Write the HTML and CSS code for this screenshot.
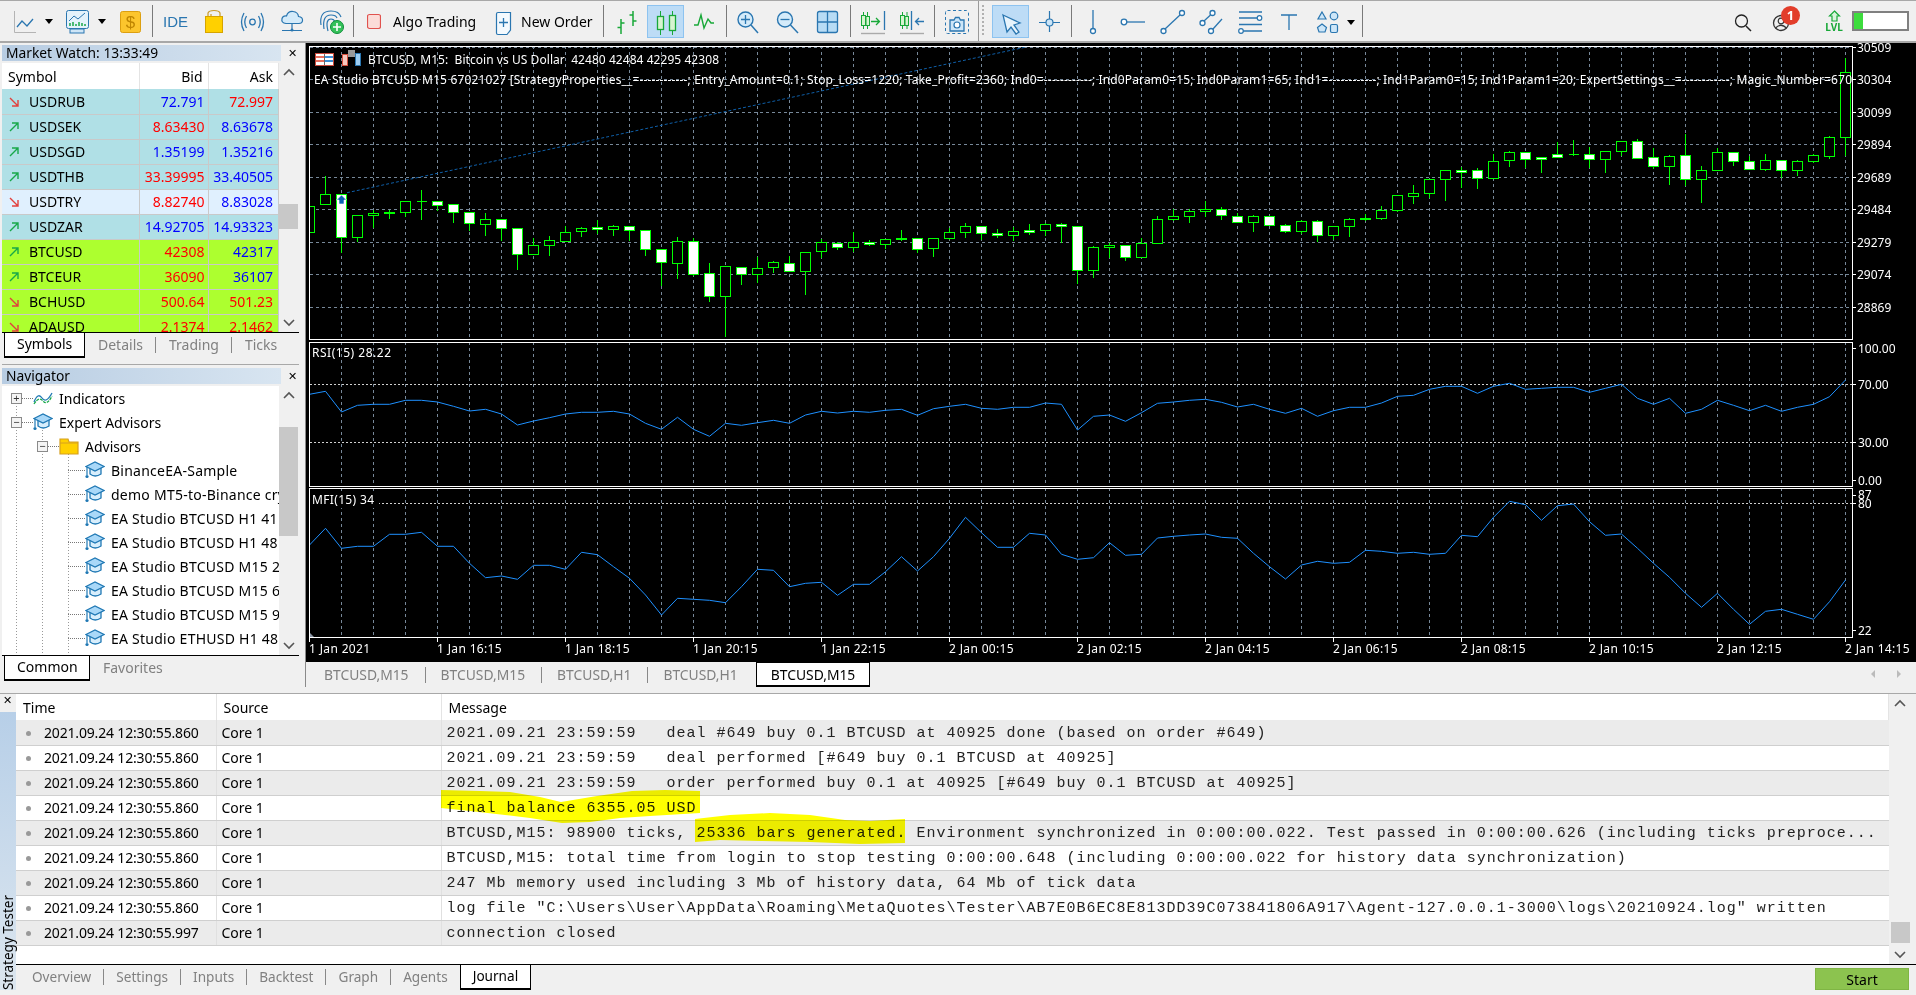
FILE: index.html
```html
<!DOCTYPE html>
<html lang="en">
<head>
    <meta charset="UTF-8">
    <title>MetaTrader 5</title>
    <link rel="stylesheet" href="styles.css">
</head>
<body>

<svg class="defs" width="0" height="0">
    <symbol id="ar-up" viewBox="0 0 10 10"><path d="M1 9 L9 1 M3 1 H9 V7" fill="none" stroke="#18a84a" stroke-width="1.4"/></symbol>
    <symbol id="ar-dn" viewBox="0 0 10 10"><path d="M1 1 L9 9 M3 9 H9 V3" fill="none" stroke="#e2403c" stroke-width="1.4"/></symbol>
    <symbol id="cap" viewBox="0 0 20 20">
        <path d="M5 8 V14 Q10 18 16 14 V8" fill="#d8eefc" stroke="#1f78b4" stroke-width="1.3"/>
        <path d="M1 6.5 L10 2 L19 6.5 L10 11 Z" fill="#a9d8f8" stroke="#1f78b4" stroke-width="1.3"/>
        <path d="M2 7 V15" stroke="#1f78b4" stroke-width="1.2"/>
        <circle cx="2" cy="16.5" r="1.6" fill="#1f78b4"/>
    </symbol>
    <symbol id="chev-up" viewBox="0 0 14 20"><path d="M2 12 L7 7 L12 12" fill="none" stroke="#555" stroke-width="1.6"/></symbol>
    <symbol id="chev-dn" viewBox="0 0 14 20"><path d="M2 8 L7 13 L12 8" fill="none" stroke="#555" stroke-width="1.6"/></symbol>
</svg>

<header class="toolbar">
    <svg width="36" height="40"><path d="M6.500 10 V31.500 H28" fill="none" stroke="#b4b4b4"/><path d="M9 26 L14 20 L19 25 L25 18" fill="none" stroke="#2a76b0" stroke-width="1.3"/></svg>
    <svg width="14" height="40"><path d="M1 18 h8 l-4 5z"/></svg>
    <svg width="36" height="40"><rect x="8.500" y="9.500" width="22" height="18" rx="2" fill="#e4f2fb" stroke="#2a76b0"/><path d="M11 20 L16 15 L20 18 L27 12" fill="none" stroke="#2a76b0"/><path d="M12 25 v-3 M15 25 v-4 M18 25 v-2 M21 25 v-4 M24 25 v-3 M27 25 v-2" stroke="#18a84a" stroke-width="1.5"/><rect x="12" y="28" width="14" height="4" fill="#cfe6f7" stroke="#2a76b0"/></svg>
    <svg width="14" height="40"><path d="M4 18 h8 l-4 5z"/></svg>
    <svg width="38" height="40"><rect x="12.500" y="10.500" width="20" height="21" rx="2" fill="#fcc52d" stroke="#dc9f10"/><text x="22.500" y="27" class="dollar">$</text></svg>
    <i class="sep sep-a"></i>
    <span class="ide">IDE</span>
    <svg width="44" height="40"><rect x="19.500" y="15.500" width="17" height="16" fill="#ffd000" stroke="#d6a400"/><path d="M22 15 V12 Q23 9.500 28 9.500 Q33 9.500 34 12 V15 M25 15 V13" fill="none" stroke="#c89a2a" stroke-width="1.2"/></svg>
    <svg width="42" height="40"><circle cx="22.500" cy="21" r="2.800" fill="none" stroke="#2a76b0" stroke-width="1.3"/><path d="M16.500 15 Q13 21 16.500 27 M28.500 15 Q32 21 28.500 27 M14 12 Q9 21 14 30 M31 12 Q36 21 31 30" fill="none" stroke="#2a76b0" stroke-width="1.3"/></svg>
    <svg width="40" height="40"><path d="M14 22.500 Q9 22 10 17.500 Q11 14.500 14.500 15 Q16 10 21 10.500 Q26 11 26.500 15.500 Q31 16 30.500 20 Q30 22.500 27 22.500 Z" fill="#d4ebfa" stroke="#2a76b0" stroke-width="1.2"/><path d="M20 23 V28 M10 29.500 H30" stroke="#2a76b0" stroke-width="1.2"/><circle cx="20" cy="29" r="1.500" fill="#2a76b0"/></svg>
    <svg width="36" height="40"><path d="M9 24 Q7 10 19 10 Q27 10 29 16 M12 28 Q10 14 19 14 Q24 14 25 17 M16 30 Q13 18 19 18 Q22 18 23 21" fill="none" stroke="#2a76b0" stroke-width="1.2"/><circle cx="25" cy="26" r="6.500" fill="#35c15a" stroke="#0d8f38"/><path d="M25 22 V30 M21 26 H29" stroke="#fff" stroke-width="1.6"/></svg>
    <i class="sep sep-b"></i>
    <svg class="ico-algo" width="14" height="40"><rect x="0.500" y="13.500" width="13" height="14" rx="2" fill="#fbdcd8" stroke="#e0524e" stroke-width="1.200"/></svg>
    <span class="tool-label label-algo">Algo Trading</span>
    <svg class="ico-order" width="17" height="40"><path d="M1.500 13 Q1.500 11.500 3 11.500 H15.500 V29 L12 33.500 H3 Q1.500 33.500 1.500 32 Z" fill="#f4fafe" stroke="#2a76b0" stroke-width="1.2"/><path d="M8.500 17 V26 M4 21.500 H13" stroke="#2a76b0" stroke-width="1.3"/></svg>
    <span class="tool-label label-order">New Order</span>
    <i class="sep sep-c"></i>
    <svg width="43" height="40"><path d="M17 33 V18 M13.500 26.500 H17 M17 22 H20.500 M29 25 V10 M25.500 14 H29 M29 20 H32.500" fill="none" stroke="#18a838" stroke-width="1.5"/></svg>
    <svg class="on" width="37" height="33"><path d="M12.500 5 V29 M24.500 5 V29" stroke="#18a838"/><rect x="9.500" y="10.500" width="6" height="13" fill="#d7f4d0" stroke="#18a838" stroke-width="1.300"/><rect x="21.500" y="9.500" width="6" height="15" fill="#d7f4d0" stroke="#18a838" stroke-width="1.300"/></svg>
    <svg width="38" height="40"><path d="M10 24 L14 24 L17 14 L20 27 L24 18 L27 22 L30 22" fill="none" stroke="#18a838" stroke-width="1.4"/></svg>
    <i class="sep sep-d"></i>
    <svg width="41" height="40"><circle cx="18.500" cy="18.500" r="7.500" fill="#d4ebfa" stroke="#2a76b0" stroke-width="1.400"/><path d="M18.500 14 V23 M14 18.500 H23" stroke="#2a76b0" stroke-width="1.300"/><path d="M24 24 L31 32" stroke="#2a76b0" stroke-width="1.500"/></svg>
    <svg width="40" height="40"><circle cx="17" cy="18.500" r="7.500" fill="#d4ebfa" stroke="#2a76b0" stroke-width="1.400"/><path d="M12.500 18.500 H21.500" stroke="#2a76b0" stroke-width="1.300"/><path d="M22.500 24 L30 32" stroke="#2a76b0" stroke-width="1.500"/></svg>
    <svg width="38" height="40"><rect x="9.500" y="10.500" width="20" height="21" rx="2" fill="#b8dcf5" stroke="#2a76b0" stroke-width="1.300"/><path d="M19.500 11 V31 M10 21 H29" stroke="#2a76b0" stroke-width="1.300"/></svg>
    <i class="sep sep-e"></i>
    <svg width="41" height="40"><path d="M12.500 11 V28 M16.500 11 V28" stroke="#18a838"/><rect x="10.500" y="14.500" width="4" height="10" fill="#d7f4d0" stroke="#18a838"/><rect x="15" y="15.500" width="3.500" height="9" fill="#d7f4d0" stroke="#18a838"/><path d="M20 20.500 H28 M25 17 L28.500 20.500 L25 24" fill="none" stroke="#18a838" stroke-width="1.300"/><path d="M33.500 10 V29" stroke="#2a76b0" stroke-width="1.300"/><path d="M10 32.500 H34" stroke="#aaa" stroke-width="1.400"/></svg>
    <svg width="39" height="40"><path d="M10.500 11 V28 M15 11 V28" stroke="#18a838"/><rect x="8.500" y="14.500" width="4" height="10" fill="#d7f4d0" stroke="#18a838"/><rect x="13" y="15.500" width="3.500" height="9" fill="#d7f4d0" stroke="#18a838"/><path d="M19.500 10 V29" stroke="#2a76b0" stroke-width="1.300"/><path d="M32 20.500 H24 M27 17 L23.500 20.500 L27 24" fill="none" stroke="#2a76b0" stroke-width="1.300"/><path d="M8 32.500 H32" stroke="#aaa" stroke-width="1.400"/></svg>
    <i class="sep sep-f"></i>
    <svg width="40" height="40"><rect x="10.500" y="9.500" width="23" height="23" rx="2" fill="none" stroke="#2a76b0" stroke-dasharray="3 2.500"/><path d="M15 19 H19 L20.500 16.500 H24 L25.500 19 H29 V30 H15 Z" fill="#cde6f8" stroke="#2a76b0" stroke-width="1.300"/><circle cx="22" cy="24" r="3" fill="#fff" stroke="#2a76b0" stroke-width="1.200"/></svg>
    <i class="grip"></i>
    <svg class="on" width="37" height="33"><path d="M10 9 L27 17 L21 19 L26 26 L23 28 L18 21 L14 26 Z" fill="#e8f4fc" stroke="#2a76b0" stroke-width="1.300"/></svg>
    <svg width="38" height="40"><path d="M20.500 10 V31 M10 21.500 H31" stroke="#2a76b0" stroke-width="1.200"/><circle cx="20.500" cy="21.500" r="3.500" fill="#cde6f8" stroke="#2a76b0" stroke-width="1.200"/></svg>
    <i class="sep sep-g"></i>
    <svg width="41" height="40"><path d="M21 9 V27" stroke="#2a76b0" stroke-width="1.300"/><circle cx="21" cy="30" r="2.500" fill="#fff" stroke="#2a76b0" stroke-width="1.300"/></svg>
    <svg width="40" height="40"><circle cx="11" cy="21" r="2.800" fill="#fff" stroke="#2a76b0" stroke-width="1.300"/><path d="M14 21 H32" stroke="#2a76b0" stroke-width="1.300"/></svg>
    <svg width="39" height="40"><circle cx="10.500" cy="30" r="2.500" fill="#fff" stroke="#2a76b0" stroke-width="1.300"/><circle cx="29" cy="12" r="2.500" fill="#fff" stroke="#2a76b0" stroke-width="1.300"/><path d="M12 28 L27 14" stroke="#2a76b0" stroke-width="1.300"/></svg>
    <svg width="39" height="40"><circle cx="10.500" cy="22" r="2.500" fill="#fff" stroke="#2a76b0" stroke-width="1.300"/><circle cx="20.500" cy="12" r="2.500" fill="#fff" stroke="#2a76b0" stroke-width="1.300"/><path d="M12 20 L18.500 14" stroke="#2a76b0" stroke-width="1.300"/><circle cx="19" cy="30" r="2.500" fill="#fff" stroke="#2a76b0" stroke-width="1.300"/><path d="M21 28 L30 18" stroke="#2a76b0" stroke-width="1.300"/></svg>
    <svg width="40" height="40"><path d="M8 11 H31 M8 17 H26 M8 23.500 H31 M12 30 H31" stroke="#2a76b0" stroke-width="1.300"/><circle cx="28.500" cy="17" r="2.300" fill="#fff" stroke="#2a76b0" stroke-width="1.200"/><circle cx="10" cy="30" r="2.300" fill="#fff" stroke="#2a76b0" stroke-width="1.200"/></svg>
    <svg width="36" height="40"><path d="M10 14 H26 M18 14 V29" stroke="#2a76b0" stroke-width="1.300"/></svg>
    <svg width="39" height="40"><path d="M15 11 L19 18 H11 Z" fill="#cde6f8" stroke="#2a76b0" stroke-width="1.200"/><circle cx="27" cy="15" r="3.800" fill="#cde6f8" stroke="#2a76b0" stroke-width="1.200"/><path d="M15 23 L19.500 26.500 L18 31 H12 L10.500 26.500 Z" fill="#cde6f8" stroke="#2a76b0" stroke-width="1.200"/><rect x="23.500" y="23.500" width="7" height="8" rx="1.500" fill="#cde6f8" stroke="#2a76b0" stroke-width="1.200"/></svg>
    <svg width="13" height="40"><path d="M1 19 h8 l-4 5z"/></svg>
    <i class="sep sep-h"></i>

    <div class="tool-right">
        <svg width="18" height="40"><circle cx="7.500" cy="20" r="6" fill="none" stroke="#222" stroke-width="1.300"/><path d="M12 25 L17 30" stroke="#222" stroke-width="1.500"/></svg>
        <div class="user">
            <svg width="18" height="40"><circle cx="9" cy="22" r="7.500" fill="none" stroke="#333" stroke-width="1.300"/><circle cx="9" cy="20" r="2.800" fill="none" stroke="#333" stroke-width="1.200"/><path d="M3.500 27 Q9 21.500 14.500 27" fill="none" stroke="#333" stroke-width="1.200"/></svg>
            <span class="badge">1</span>
        </div>
        <div class="lvl">
            <svg width="15" height="12"><path d="M7.500 1 L12.500 6 H10 V11 H5 V6 H2.500 Z" fill="#d8f5dc" stroke="#18a838" stroke-width="1.200"/></svg>
            <span>LVL</span>
        </div>
        <div class="level-bar"><div class="level-fill"></div></div>
    </div>
</header>

<div class="middle">
    <aside class="side">
        <section class="panel">
            <div class="panel-head">
                <div class="panel-title">Market Watch: 13:33:49</div>
                <span class="panel-close">✕</span>
            </div>
            <div class="panel-body">
                <div class="panel-view">
                    <table class="quotes">
                        <tr class="quotes-head"><th class="c-sym">Symbol</th><th>Bid</th><th>Ask</th></tr>
                        <tr class="teal"><td class="c-sym"><svg class="arr"><use href="#ar-dn"/></svg>USDRUB</td><td class="b">72.791</td><td class="r">72.997</td></tr>
                        <tr class="teal"><td class="c-sym"><svg class="arr"><use href="#ar-up"/></svg>USDSEK</td><td class="r">8.63430</td><td class="b">8.63678</td></tr>
                        <tr class="teal"><td class="c-sym"><svg class="arr"><use href="#ar-up"/></svg>USDSGD</td><td class="b">1.35199</td><td class="b">1.35216</td></tr>
                        <tr class="teal"><td class="c-sym"><svg class="arr"><use href="#ar-up"/></svg>USDTHB</td><td class="r">33.39995</td><td class="b">33.40505</td></tr>
                        <tr class="pale"><td class="c-sym"><svg class="arr"><use href="#ar-dn"/></svg>USDTRY</td><td class="r">8.82740</td><td class="b">8.83028</td></tr>
                        <tr class="teal"><td class="c-sym"><svg class="arr"><use href="#ar-up"/></svg>USDZAR</td><td class="b">14.92705</td><td class="b">14.93323</td></tr>
                        <tr class="lime"><td class="c-sym"><svg class="arr"><use href="#ar-up"/></svg>BTCUSD</td><td class="r">42308</td><td class="b">42317</td></tr>
                        <tr class="lime"><td class="c-sym"><svg class="arr"><use href="#ar-up"/></svg>BTCEUR</td><td class="r">36090</td><td class="b">36107</td></tr>
                        <tr class="lime"><td class="c-sym"><svg class="arr"><use href="#ar-dn"/></svg>BCHUSD</td><td class="r">500.64</td><td class="r">501.23</td></tr>
                        <tr class="lime"><td class="c-sym"><svg class="arr"><use href="#ar-dn"/></svg>ADAUSD</td><td class="r">2.1374</td><td class="r">2.1462</td></tr>
                    </table>
                </div>
                <div class="scroll">
                    <svg width="14" height="20"><use href="#chev-up"/></svg>
                    <div class="thumb thumb-quotes"></div>
                    <svg class="scroll-end" width="14" height="20"><use href="#chev-dn"/></svg>
                </div>
            </div>
            <div class="tabs">
                <span class="tab active tab-symbols">Symbols</span>
                <span class="tab">Details</span>
                <span class="tab">Trading</span>
                <span class="tab last">Ticks</span>
            </div>
        </section>

        <section class="panel panel-nav">
            <div class="panel-head">
                <div class="panel-title">Navigator</div>
                <span class="panel-close">✕</span>
            </div>
            <div class="panel-body">
                <div class="panel-view tree">
                    <div class="node lv1"><i class="box">+</i><i class="dots"></i><svg class="node-ico" viewBox="0 0 20 20"><path d="M1 14 Q5 4 9 10 T19 5" fill="none" stroke="#1f78b4" stroke-width="1.300"/><path d="M1 16 Q6 8 10 13 T19 8" fill="none" stroke="#18a84a" stroke-width="1.300" stroke-dasharray="3 1"/></svg><span>Indicators</span></div>
                    <div class="node lv1"><i class="box">−</i><i class="dots"></i><svg class="node-ico"><use href="#cap"/></svg><span>Expert Advisors</span></div>
                    <div class="node lv2"><i class="box">−</i><i class="dots"></i><svg class="node-ico" viewBox="0 0 20 20"><path d="M1 18 V3 H9 L10 6 H19 V18 Z" fill="#ffd000" stroke="#d6a020" stroke-width="1.200"/><path d="M1 7 H19" stroke="#d6a020"/></svg><span>Advisors</span></div>
                    <div class="node lv3"><i class="dots"></i><svg class="node-ico"><use href="#cap"/></svg><span>BinanceEA-Sample</span></div>
                    <div class="node lv3"><i class="dots"></i><svg class="node-ico"><use href="#cap"/></svg><span>demo MT5-to-Binance crypto</span></div>
                    <div class="node lv3"><i class="dots"></i><svg class="node-ico"><use href="#cap"/></svg><span>EA Studio BTCUSD H1 41</span></div>
                    <div class="node lv3"><i class="dots"></i><svg class="node-ico"><use href="#cap"/></svg><span>EA Studio BTCUSD H1 48</span></div>
                    <div class="node lv3"><i class="dots"></i><svg class="node-ico"><use href="#cap"/></svg><span>EA Studio BTCUSD M15 2</span></div>
                    <div class="node lv3"><i class="dots"></i><svg class="node-ico"><use href="#cap"/></svg><span>EA Studio BTCUSD M15 6</span></div>
                    <div class="node lv3"><i class="dots"></i><svg class="node-ico"><use href="#cap"/></svg><span>EA Studio BTCUSD M15 9</span></div>
                    <div class="node lv3"><i class="dots"></i><svg class="node-ico"><use href="#cap"/></svg><span>EA Studio ETHUSD H1 48</span></div>
                </div>
                <div class="scroll">
                    <svg width="14" height="20"><use href="#chev-up"/></svg>
                    <div class="thumb thumb-nav"></div>
                    <svg class="scroll-end" width="14" height="20"><use href="#chev-dn"/></svg>
                </div>
            </div>
            <div class="tabs">
                <span class="tab active tab-common">Common</span>
                <span class="tab last">Favorites</span>
            </div>
        </section>
    </aside>

    <main class="main">
        <svg class="chart" viewBox="306 43 1610 619" width="1610" height="619">
            <defs>
                <clipPath id="plot"><rect x="309" y="46" width="1543" height="293"/></clipPath>
            </defs>
            <g id="grid" class="crisp"></g>
            <path d="M347 192.700 L1027.700 46.700" clip-path="url(#plot)" class="trend"/>
            <g id="candles" class="crisp" clip-path="url(#plot)"></g>
            <path d="M341.500 195 L346.500 200 H344 V204 H339 V200 H336.500 Z" fill="#0a62b4" stroke="#fff" stroke-width="0.600"/>

            <g id="levels" class="crisp"></g>
            <rect x="310" y="494" width="69" height="14" fill="#000"/>
            <path id="rsi" class="ind"/>
            <path id="mfi" class="ind"/>
            <path d="M309 632 L314 637 H309 Z" fill="#8a95a5"/>
            <g id="frames" class="crisp"></g>

            <rect x="315.500" y="53.500" width="18" height="12" fill="#fff" stroke="#c94a3c"/>
            <path d="M316 57 H324 M316 61 H324" stroke="#e8705f" stroke-width="2"/><path d="M325 57 H333 M325 61 H333" stroke="#3d8fd4" stroke-width="2"/><path d="M324.500 54 V65" stroke="#666"/>
            <rect x="342.500" y="54.500" width="5" height="11" fill="#f6c8bf" stroke="#d4503e"/>
            <rect x="348" y="50" width="7" height="7" fill="#999"/>
            <rect x="355.500" y="53.500" width="5" height="12" fill="#9dcdf2" stroke="#2a76b0"/>

            <text x="368" y="63.500" class="t" textLength="351" lengthAdjust="spacing">BTCUSD, M15:&#160; Bitcoin vs US Dollar &#160;42480 42484 42295 42308</text>
            <text x="314" y="83.500" class="t" textLength="1538" lengthAdjust="spacing">EA Studio BTCUSD M15 67021027 [StrategyProperties__=------------; Entry_Amount=0.1; Stop_Loss=1220; Take_Profit=2360; Ind0=------------; Ind0Param0=15; Ind0Param1=65; Ind1=------------; Ind1Param0=15; Ind1Param1=20; ExpertSettings__=------------; Magic_Number=670</text>
            <text x="312" y="356.500" class="t" textLength="79" lengthAdjust="spacing">RSI(15) 28.22</text>
            <text x="312" y="503.500" class="t" textLength="62" lengthAdjust="spacing">MFI(15) 34</text>

            <g class="t">
                <text x="1857" y="51.500">30509</text>
                <text x="1857" y="83.500">30304</text>
                <text x="1857" y="116.500">30099</text>
                <text x="1857" y="148.500">29894</text>
                <text x="1857" y="181.500">29689</text>
                <text x="1857" y="213.500">29484</text>
                <text x="1857" y="246.500">29279</text>
                <text x="1857" y="278.500">29074</text>
                <text x="1857" y="311.500">28869</text>
                <text x="1858" y="352.500">100.00</text>
                <text x="1858" y="388.500">70.00</text>
                <text x="1858" y="446.500">30.00</text>
                <text x="1858" y="484.500">0.00</text>
                <text x="1858" y="499">87</text>
                <text x="1858" y="507.500">80</text>
                <text x="1858" y="634.500">22</text>
            </g>
            <g class="t time-axis">
                <text x="309" y="652.500">1 Jan 2021</text>
                <text x="437" y="652.500">1 Jan 16:15</text>
                <text x="565" y="652.500">1 Jan 18:15</text>
                <text x="693" y="652.500">1 Jan 20:15</text>
                <text x="821" y="652.500">1 Jan 22:15</text>
                <text x="949" y="652.500">2 Jan 00:15</text>
                <text x="1077" y="652.500">2 Jan 02:15</text>
                <text x="1205" y="652.500">2 Jan 04:15</text>
                <text x="1333" y="652.500">2 Jan 06:15</text>
                <text x="1461" y="652.500">2 Jan 08:15</text>
                <text x="1589" y="652.500">2 Jan 10:15</text>
                <text x="1717" y="652.500">2 Jan 12:15</text>
                <text x="1845" y="652.500">2 Jan 14:15</text>
            </g>
        </svg>

        <div class="chart-tabs">
            <span class="ctab">BTCUSD,M15</span>
            <span class="ctab">BTCUSD,M15</span>
            <span class="ctab">BTCUSD,H1</span>
            <span class="ctab last">BTCUSD,H1</span>
            <span class="ctab active">BTCUSD,M15</span>
            <span class="ctab-arrows">
                <svg width="8" height="12"><path d="M6 2 L2 6 L6 10 Z" fill="#bbb"/></svg>
                <svg width="8" height="12"><path d="M2 2 L6 6 L2 10 Z" fill="#bbb"/></svg>
            </span>
        </div>
    </main>
</div>

<section class="tester">
    <div class="strip">
        <span class="strip-close">✕</span>
        <div class="strip-bar"><span>Strategy Tester</span></div>
    </div>
    <div class="tester-main">
        <div class="log-wrap">
            <div class="log-view">
                <table class="log">
                    <tr class="log-head"><th class="c-time">Time</th><th class="c-src">Source</th><th>Message</th></tr>
                    <tr><td class="c-time"><i class="dot"></i>2021.09.24 12:30:55.860</td><td class="c-src">Core 1</td><td class="msg">2021.09.21 23:59:59   deal #649 buy 0.1 BTCUSD at 40925 done (based on order #649)</td></tr>
                    <tr><td class="c-time"><i class="dot"></i>2021.09.24 12:30:55.860</td><td class="c-src">Core 1</td><td class="msg">2021.09.21 23:59:59   deal performed [#649 buy 0.1 BTCUSD at 40925]</td></tr>
                    <tr><td class="c-time"><i class="dot"></i>2021.09.24 12:30:55.860</td><td class="c-src">Core 1</td><td class="msg">2021.09.21 23:59:59   order performed buy 0.1 at 40925 [#649 buy 0.1 BTCUSD at 40925]</td></tr>
                    <tr><td class="c-time"><i class="dot"></i>2021.09.24 12:30:55.860</td><td class="c-src">Core 1</td><td class="msg">final balance 6355.05 USD</td></tr>
                    <tr><td class="c-time"><i class="dot"></i>2021.09.24 12:30:55.860</td><td class="c-src">Core 1</td><td class="msg">BTCUSD,M15: 98900 ticks, 25336 bars generated. Environment synchronized in 0:00:00.022. Test passed in 0:00:00.626 (including ticks preproce...</td></tr>
                    <tr><td class="c-time"><i class="dot"></i>2021.09.24 12:30:55.860</td><td class="c-src">Core 1</td><td class="msg">BTCUSD,M15: total time from login to stop testing 0:00:00.648 (including 0:00:00.022 for history data synchronization)</td></tr>
                    <tr><td class="c-time"><i class="dot"></i>2021.09.24 12:30:55.860</td><td class="c-src">Core 1</td><td class="msg">247 Mb memory used including 3 Mb of history data, 64 Mb of tick data</td></tr>
                    <tr><td class="c-time"><i class="dot"></i>2021.09.24 12:30:55.860</td><td class="c-src">Core 1</td><td class="msg">log file "C:\Users\User\AppData\Roaming\MetaQuotes\Tester\AB7E0B6EC8E813DD39C073841806A917\Agent-127.0.0.1-3000\logs\20210924.log" written</td></tr>
                    <tr><td class="c-time"><i class="dot"></i>2021.09.24 12:30:55.997</td><td class="c-src">Core 1</td><td class="msg">connection closed</td></tr>
                </table>
            </div>
            <div class="scroll scroll-log">
                <svg width="14" height="20"><use href="#chev-up"/></svg>
                <div class="thumb thumb-log"></div>
                <svg class="scroll-end" width="14" height="20"><use href="#chev-dn"/></svg>
            </div>
        </div>
        <div class="tabs tabs-tester">
            <span class="tab">Overview</span>
            <span class="tab">Settings</span>
            <span class="tab">Inputs</span>
            <span class="tab">Backtest</span>
            <span class="tab">Graph</span>
            <span class="tab last">Agents</span>
            <span class="tab active">Journal</span>
            <button class="start">Start</button>
        </div>
    </div>
</section>

<!-- marker strokes drawn over the journal -->
<svg class="marks" viewBox="0 0 1916 995" width="1916" height="995">
    <path d="M441 790 L480 791 L510 792 L540 797 L561 802 L597 796 L632 791 L665 790 L700 791 L700 813 L650 816 L620 818 L590 822 L562 823 L530 818 L505 815 L470 811 L441 808 Z"/>
    <path d="M695 819 L730 815 L770 813 L810 815 L845 820 L870 821 L905 819 L905 843 L860 844 L810 842 L760 841 L720 840 L695 842 Z"/>
</svg>

<script>
    // candles: body top, body bottom, high, low, white body (1) or black (0)
    // all y values are in thirds of a pixel, counted from y = 40
    const candles = [
        [497,575,497,575,0],[461,493,405,493,0],[461,592,461,635,1],[526,592,522,603,0],[520,526,507,562,0],
        [516,520,507,533,1],[484,517,480,527,0],[484,484,447,537,0],[484,494,484,510,1],[493,517,490,545,1],
        [515,550,515,570,1],[538,551,516,585,0],[538,565,535,600,1],[565,643,562,687,1],[616,643,590,643,0],
        [601,616,586,645,0],[577,602,556,602,0],[565,574,558,587,0],[562,566,538,580,1],[559,566,552,584,0],
        [559,571,559,600,1],[571,628,571,645,1],[628,667,625,736,1],[604,670,588,713,0],[604,701,592,706,1],
        [700,767,667,782,1],[679,767,679,887,0],[680,703,680,732,1],[683,703,648,725,0],[667,682,660,696,0],
        [668,694,646,694,1],[637,694,633,761,0],[607,634,595,652,0],[608,622,603,628,1],[607,622,574,634,0],
        [607,612,598,614,1],[598,612,595,624,0],[595,598,567,601,1],[595,628,595,635,1],[595,625,591,647,0],
        [577,595,562,598,0],[559,577,546,590,0],[559,580,559,598,1],[580,586,565,590,1],[574,586,557,600,0],
        [571,575,549,582,1],[553,571,547,585,0],[553,559,547,607,1],[559,691,559,728,1],[622,691,616,710,0],
        [616,622,607,652,0],[616,652,613,660,1],[610,652,592,652,0],[538,610,526,610,0],[529,538,505,540,0],
        [514,529,505,545,0],[508,514,481,527,0],[508,526,499,537,1],[529,547,517,547,1],[529,547,522,573,0],
        [529,556,529,556,1],[556,574,550,577,1],[544,574,538,580,0],[544,586,538,602,1],[559,586,559,598,0],
        [538,559,532,587,0],[535,538,519,540,1],[511,535,495,538,0],[466,511,466,514,0],[460,469,432,489,0],
        [418,460,418,472,0],[391,418,388,480,0],[391,395,379,440,1],[391,415,381,443,1],[364,415,340,415,0],
        [337,361,331,378,0],[337,358,337,382,1],[352,358,349,395,1],[343,352,304,352,1],[343,343,297,346,0],
        [343,358,319,380,1],[334,358,334,395,0],[304,334,304,346,0],[304,355,294,355,1],[352,379,322,385,1],
        [349,379,343,431,0],[346,418,280,436,1],[391,418,376,485,0],[337,391,322,391,0],[337,364,334,376,1],
        [364,388,346,388,1],[361,388,340,391,0],[361,391,361,412,1],[364,391,358,405,0],[346,364,340,367,0],
        [292,349,286,355,0],[97,292,52,346,0]
    ];
    const rsi = [163,154,216,196,193,193,181,181,186,199,213,208,222,255,243,233,222,217,217,214,222,250,268,232,268,289,250,256,248,241,250,225,214,219,214,217,211,208,226,206,199,193,205,208,202,202,189,193,270,229,225,244,218,190,186,181,178,187,201,193,208,220,205,229,212,202,202,189,169,166,148,139,139,160,139,130,148,145,142,142,157,145,133,175,193,175,220,208,181,196,212,196,214,202,193,170,120];
    const mfi = [615,565,625,619,619,583,583,577,619,619,670,713,708,718,676,676,688,637,644,680,715,765,825,775,778,781,788,740,688,691,740,730,727,766,733,733,695,650,693,650,595,532,578,622,622,580,585,643,658,653,608,646,643,594,589,585,582,592,595,640,680,717,675,664,670,667,631,634,640,637,643,640,586,590,532,484,494,541,497,492,545,586,582,625,670,712,760,802,760,808,853,814,808,823,838,785,720];

    const candleX = i => 309.5 + 16 * i;
    const snap = v => Math.round(40 + v / 3) + 0.5;

    function drawCandles() {
        let html = '';
        candles.forEach(([top, bot, hi, lo, white], i) => {
            const x = candleX(i);
            const y1 = snap(top);
            const y2 = snap(bot);
            html += `<path d="M${x} ${snap(hi)}V${snap(lo)}" class="wick"/>`;
            if (y1 === y2) {
                html += `<path d="M${x - 5} ${y1}H${x + 5}" class="wick"/>`;
            } else {
                html += `<rect x="${x - 5}" y="${y1}" width="10" height="${y2 - y1}" class="${white ? 'bull' : 'bear'}"/>`;
            }
        });
        document.getElementById('candles').innerHTML = html;
    }

    function drawGrid() {
        const mainRows = [47, 79, 112, 144, 177, 209, 242, 274, 307];
        const panes = [[46, 339], [342, 486], [488, 637]];
        let d = '';
        for (let x = 341.5; x < 1850; x += 32) {
            panes.forEach(([a, b]) => { d += `M${x} ${a}V${b}`; });
        }
        mainRows.forEach(y => { d += `M310 ${y + 0.5}H1852`; });
        document.getElementById('grid').innerHTML = `<path d="${d}" class="gridline"/>`;

        document.getElementById('levels').innerHTML = '<path d="M310 384.500H1852M310 442.500H1852M310 503.500H1852" class="level"/>';

        let frame = 'M309.500 46.500H1852.500V339.500H309.500ZM309.500 342.500H1852.500V486.500H309.500ZM309.500 488.500H1852.500V637.500H309.500Z';
        [47, 79, 112, 144, 177, 209, 242, 274, 307, 348, 384, 442, 480, 495, 503, 630].forEach(y => {
            frame += `M1852 ${y + 0.5}h4`;
        });
        for (let x = 309.5; x < 1850; x += 128) {
            frame += `M${x} 637V642`;
        }
        document.getElementById('frames').innerHTML = `<path d="${frame}" class="frame"/>`;
    }

    function drawLine(id, values) {
        const d = values.map((v, i) => `${i ? 'L' : 'M'}${candleX(i)} ${(340 + v / 3).toFixed(1)}`).join('');
        document.getElementById(id).setAttribute('d', d);
    }

    drawGrid();
    drawCandles();
    drawLine('rsi', rsi);
    drawLine('mfi', mfi);
</script>
</body>
</html>
```

FILE: styles.css
```css
* {
    box-sizing: border-box;
}

body {
    margin: 0;
    width: 1916px;
    height: 995px;
    overflow: hidden;
    position: relative;
    background-color: #f0f0f0;
    color: #000;
    font-family: "Noto Sans", sans-serif;
    font-size: 14px;
}

.defs {
    position: absolute;
}

svg {
    display: block;
    flex: none;
}

/* toolbar */

.toolbar {
    display: flex;
    align-items: center;
    height: 43px;
    padding-left: 8px;
    background-color: #f0f0f0;
    border-top: 1px solid #a8a8a8;
    border-bottom: 2px solid #a8a8a8;
}

.toolbar svg.on {
    background-color: #bddcf6;
    border: 1px solid #8dc3f0;
}

.sep {
    flex: none;
    width: 1px;
    height: 32px;
    background-color: #7a7a7a;
}

.sep-a { margin-left: 6px; }
.sep-b { margin-left: 5px; }
.sep-c { margin-left: 10px; }
.sep-d { margin-left: 4px; }
.sep-e { margin-left: 4px; }
.sep-f { margin-left: 3px; }
.sep-g { margin-left: 4px; }
.sep-h { margin-left: 3px; }

.grip {
    flex: none;
    width: 17px;
    height: 40px;
    margin-right: 0;
    background:
        linear-gradient(#9a9a9a, #9a9a9a) 3px 0 / 1px 100% no-repeat,
        repeating-linear-gradient(#b0b0b0 0 2px, transparent 2px 4px) 7px 4px / 2px 32px no-repeat;
}

.dollar {
    font-family: "Liberation Sans", sans-serif;
    font-size: 17px;
    text-anchor: middle;
    fill: #bf8500;
}

.ide {
    width: 23px;
    margin-left: 10px;
    color: #2a76b0;
    font-family: "Liberation Sans", sans-serif;
    font-size: 15px;
    white-space: nowrap;
}

.ico-algo { margin-left: 13px; }
.ico-order { margin-left: 18px; }

.tool-label {
    white-space: nowrap;
}

.label-algo { margin-left: 12px; width: 84px; }
.label-order { margin-left: 9px; width: 72px; }

.tool-right {
    display: flex;
    align-items: center;
    margin-left: auto;
    padding-right: 7px;
}

.user {
    position: relative;
    margin-left: 20px;
}

.badge {
    position: absolute;
    left: 9px;
    top: 5px;
    width: 19px;
    height: 19px;
    border-radius: 50%;
    background-color: #e23d2a;
    color: #fff;
    font-size: 13px;
    font-weight: bold;
    line-height: 19px;
    text-align: center;
}

.lvl {
    width: 18px;
    margin-left: 35px;
    display: flex;
    flex-direction: column;
    align-items: center;
    color: #18a838;
    font-size: 10px;
    font-weight: bold;
    line-height: 11px;
}

.level-bar {
    width: 57px;
    height: 20px;
    margin-left: 9px;
    background-color: #fff;
    border: 2px solid #808080;
}

.level-fill {
    width: 9px;
    height: 100%;
    background-color: #3ddc3d;
}

/* left side */

.middle {
    display: flex;
    height: 644px;
}

.side {
    flex: none;
    width: 306px;
    padding: 2px 0 0 2px;
    border-right: 1px solid #8a8a8a;
}

.panel {
    width: 297px;
}

.panel-nav {
    margin-top: 7px;
    padding-top: 3px;
    border-top: 1px solid #a8a8a8;
}

.panel-head {
    display: flex;
    height: 18px;
}

.panel-title {
    width: 279px;
    height: 16px;
    padding-left: 4px;
    background: linear-gradient(90deg, #b7cce2, #d8e5f1);
    font-size: 13.800px;
    line-height: 16px;
}

.panel-close {
    width: 18px;
    height: 16px;
    text-align: center;
    font-size: 11px;
    line-height: 16px;
    padding-left: 5px;
}

.panel-body {
    display: flex;
    height: 269px;
}

.panel-view {
    width: 277px;
    overflow: hidden;
    background-color: #fff;
}

.scroll {
    display: flex;
    flex-direction: column;
    align-items: center;
    width: 19px;
    background-color: #f0f0f0;
}

.thumb {
    width: 100%;
    background-color: #c8c8c8;
}

.thumb-quotes { margin-top: 121px; height: 25px; }
.thumb-nav { margin-top: 21px; height: 109px; }
.thumb-log { margin-top: 208px; height: 21px; }

.scroll-end {
    margin-top: auto;
}

.quotes {
    width: 277px;
    table-layout: fixed;
    border-collapse: collapse;
    font-size: 14px;
}

.quotes th,
.quotes td {
    height: 25px;
    padding: 0 5px 0 0;
    text-align: right;
    font-weight: normal;
    border-right: 1px solid #c9c9c9;
    border-bottom: 1px solid #c9c9c9;
    white-space: nowrap;
}

.quotes th {
    height: 26px;
    border-bottom: none;
    border-right-color: #e4e4e4;
}

.quotes th:first-child {
    padding-left: 6px;
}

.quotes .c-sym {
    width: 137px;
    text-align: left;
}

.quotes td.c-sym {
    padding-left: 7px;
}

.quotes th:nth-child(2) {
    width: 69px;
}

.quotes td:nth-child(2) {
    padding-right: 3px;
}

.arr {
    display: inline-block;
    width: 10px;
    height: 10px;
    margin-right: 10px;
}

.teal td { background-color: #b0e0e6; }
.pale td { background-color: #e0f0fe; }
.lime td { background-color: #adff2f; }
.b { color: #0000ff; }
.r { color: #ff0000; }

.tabs {
    display: flex;
    align-items: flex-start;
    height: 25px;
    border-top: 1px solid #000;
    padding-left: 2px;
    font-size: 14px;
    color: #808080;
}

.tab {
    height: 16px;
    margin-top: 4px;
    padding: 0 12px 0 13px;
    border-right: 1px solid #888;
    line-height: 16px;
    white-space: nowrap;
}

.tab.last {
    border-right: none;
}

.tab.active {
    height: 25px;
    margin-top: 0;
    background-color: #fff;
    color: #000;
    border: 1px solid #000;
    border-top: none;
    border-bottom-width: 2px;
    line-height: 22px;
}

.tab-symbols { width: 81px; padding: 0 0 0 12px; }
.tab-common { width: 86px; padding: 0 0 0 12px; }

/* navigator */

.tree {
    background:
        repeating-linear-gradient(#999 0 1px, transparent 1px 3px) 14px 17px / 1px 100% no-repeat,
        repeating-linear-gradient(#999 0 1px, transparent 1px 3px) 40px 41px / 1px 100% no-repeat,
        repeating-linear-gradient(#999 0 1px, transparent 1px 3px) 66px 65px / 1px 100% no-repeat,
        #fff;
}

.node {
    display: flex;
    align-items: center;
    height: 24px;
    white-space: nowrap;
}

.lv1 { padding-left: 9px; }
.lv2 { padding-left: 35px; }
.lv3 { padding-left: 66px; letter-spacing: 0.25px; }

.box {
    flex: none;
    width: 11px;
    height: 11px;
    background-color: #f4f4f4;
    border: 1px solid #8a8a8a;
    color: #333;
    font-style: normal;
    font-size: 11px;
    line-height: 8px;
    text-align: center;
}

.dots {
    flex: none;
    width: 11px;
    border-top: 1px dotted #777;
}

.lv3 .dots {
    width: 17px;
}

.node-ico {
    width: 20px;
    height: 20px;
    margin-right: 6px;
}

/* chart */

.main {
    flex: none;
    width: 1610px;
    overflow: hidden;
}

.chart {
    background-color: #000;
}

.crisp {
    shape-rendering: crispEdges;
}

.gridline {
    fill: none;
    stroke: #778899;
    stroke-dasharray: 3 3;
}

.level {
    fill: none;
    stroke: #d0d0d0;
    stroke-dasharray: 2 2;
}

.frame {
    fill: none;
    stroke: #fff;
}

.wick {
    fill: none;
    stroke: #00ff00;
}

.bull {
    fill: #fff;
    stroke: #00ff00;
}

.bear {
    fill: #000;
    stroke: #00ff00;
}

.trend {
    fill: none;
    stroke: #0f5fa8;
    stroke-dasharray: 3 2;
}

.ind {
    fill: none;
    stroke: #1e90ff;
    stroke-width: 1;
}

.t {
    fill: #fff;
    font-family: "Noto Sans", sans-serif;
    font-size: 12px;
}

.time-axis {
    letter-spacing: 0.350px;
}

.chart-tabs {
    display: flex;
    align-items: flex-start;
    height: 25px;
    padding-left: 3px;
    color: #808080;
    font-size: 13.850px;
}

.ctab {
    height: 16px;
    margin-top: 5px;
    padding: 0 16px 0 15px;
    border-right: 1px solid #888;
    line-height: 16px;
    white-space: nowrap;
}

.ctab.last {
    border-right: none;
    padding-right: 18px;
}

.ctab.active {
    height: 25px;
    margin-top: 0;
    padding: 0 14px;
    background-color: #fff;
    color: #000;
    border: 1px solid #000;
    border-bottom-width: 2px;
    line-height: 24px;
}

.ctab-arrows {
    display: flex;
    gap: 18px;
    margin-left: auto;
    margin-top: 6px;
    padding-right: 13px;
}

/* strategy tester */

.tester {
    display: flex;
    height: 308px;
    padding-top: 6px;
}

.strip {
    flex: none;
    width: 16px;
    border-top: 1px solid #a8a8a8;
    display: flex;
    flex-direction: column;
}

.strip-close {
    height: 18px;
    padding-right: 2px;
    text-align: center;
    font-size: 11px;
    line-height: 12px;
}

.strip-bar {
    height: 278px;
    display: flex;
    align-items: flex-end;
    background: linear-gradient(#b7cfe8, #dce6ef);
}

.strip-bar span {
    writing-mode: vertical-rl;
    transform: rotate(180deg);
    width: 16px;
    font-size: 13.500px;
    line-height: 16px;
    white-space: nowrap;
}

.tester-main {
    flex: 1;
    min-width: 0;
    border-top: 1px solid #a8a8a8;
}

.log-wrap {
    display: flex;
    height: 270px;
    padding-right: 5px;
}

.log-view {
    width: 1873px;
    overflow: hidden;
    background-color: #fff;
}

.scroll-log {
    width: 22px;
}

.scroll-log .thumb {
    width: 19px;
}

.log {
    width: 1873px;
    table-layout: fixed;
    border-collapse: collapse;
    white-space: nowrap;
}

.log th {
    height: 26px;
    padding: 0 0 0 7px;
    text-align: left;
    font-weight: normal;
    border-right: 1px solid #e4e4e4;
}

.log td {
    height: 25px;
    padding: 0;
    border-right: 1px solid #e0e0e0;
    border-bottom: 1px solid #cfcfcf;
}

.log td.c-time {
    letter-spacing: -0.170px;
}

.log tr:nth-child(even) td {
    background-color: #ebebeb;
}

.c-time {
    width: 200px;
}

.c-src {
    width: 225px;
}

.log td.c-src {
    padding-left: 5px;
}

.dot {
    display: inline-block;
    width: 5px;
    height: 5px;
    margin: 0 13px 2px 10px;
    border-radius: 50%;
    background-color: #999;
}

.log td.msg {
    padding: 2px 0 0 5px;
    color: #222;
    font-family: "Liberation Mono", monospace;
    font-size: 15px;
    letter-spacing: 1px;
    white-space: pre;
    border-right: none;
}

.tabs-tester {
    padding-left: 0;
    padding-right: 7px;
    height: 28px;
    font-size: 13.600px;
}

.tabs-tester .tab {
    padding: 0 12px;
}

.tabs-tester .tab:first-child {
    padding-left: 16px;
}

.start {
    width: 94px;
    height: 22px;
    margin: 3px 0 0 auto;
    padding: 0;
    background-color: #8cc34f;
    border: 1px solid #7fb544;
    color: #000;
    font-family: inherit;
    font-size: 14px;
}

.marks {
    position: absolute;
    left: 0;
    top: 0;
    pointer-events: none;
    mix-blend-mode: multiply;
    fill: #ffff00;
}
```
